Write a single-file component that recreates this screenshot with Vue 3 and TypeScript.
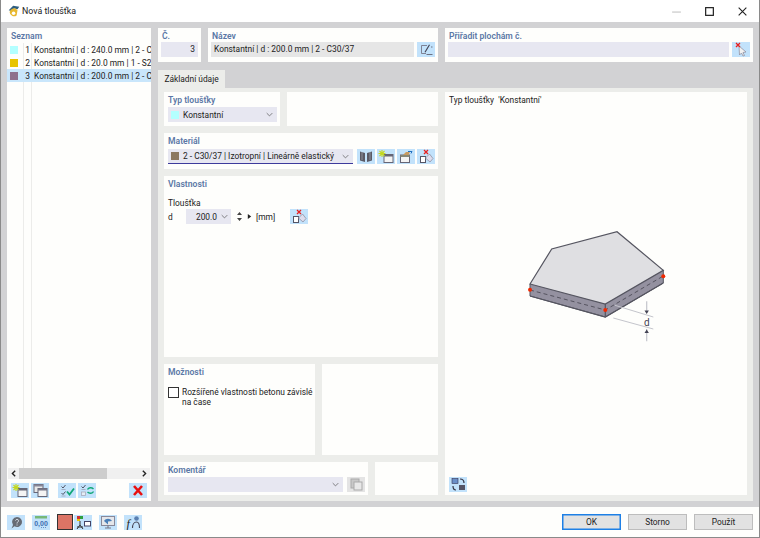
<script setup lang="ts">
interface Row {
  id: number;
  label: string;
  color: string;
  selected?: boolean;
}

const rows: Row[] = [
  { id: 1, label: "Konstantní | d : 240.0 mm | 2 - C30/37", color: "#b3ffff" },
  { id: 2, label: "Konstantní | d : 20.0 mm | 1 - S235", color: "#e8c400" },
  { id: 3, label: "Konstantní | d : 200.0 mm | 2 - C30/37", color: "#8f6f8c", selected: true },
];
</script>

<template>
  <div class="window">
    <header class="titlebar">
      <svg class="logo" viewBox="0 0 16 16">
        <path d="M2 7 L7 2 L14 3 L12 6 L8 5 L5 8 Z" fill="#2f5f80" />
        <path d="M3 9 A5 5 0 0 1 12 7 L11 13 A5 5 0 0 1 3 9 Z" fill="#e8b830" />
        <circle cx="7.5" cy="10.5" r="2" fill="#fff" />
      </svg>
      <span class="title">Nová tloušťka</span>
      <div class="winbtns">
        <svg viewBox="0 0 10 10" class="dim"><path d="M1 5.5h8" stroke="#c4c4c4" /></svg>
        <svg viewBox="0 0 10 10"><rect x="1.5" y="1.5" width="7" height="7" fill="none" stroke="#222" stroke-width="1.1" /></svg>
        <svg viewBox="0 0 10 10"><path d="M1.5 1.5l7 7M8.5 1.5l-7 7" stroke="#222" stroke-width="1" /></svg>
      </div>
    </header>

    <main class="body">
      <aside class="list card">
        <h3 class="legend first">Seznam</h3>
        <div class="rows">
          <div v-for="r in rows" :key="r.id" class="row" :class="{ selected: r.selected }">
            <span class="swatch-cell"><i class="swatch" :style="{ background: r.color }"></i></span>
            <span class="num">{{ r.id }}</span>
            <span class="row-text">{{ r.label }}</span>
          </div>
          <div class="guides"><i></i><i></i></div>
        </div>
        <div class="scrollbar">
          <svg viewBox="0 0 8 8"><path d="M5.5 1.5L3 4l2.5 2.5" fill="none" stroke="#222" stroke-width="1.2" /></svg>
          <div class="track"><div class="thumb"></div></div>
          <svg viewBox="0 0 8 8"><path d="M2.5 1.5L5 4 2.5 6.5" fill="none" stroke="#222" stroke-width="1.2" /></svg>
        </div>
        <div class="list-tools">
          <button class="ib">
            <svg viewBox="0 0 18 15"><rect x="7" y="5.500" width="9" height="8" fill="#f4f4f4" stroke="#667" /><rect x="7" y="5.500" width="9" height="2" fill="#667" /><path d="M5 1v7M1.500 4.500h7M2.500 2l5 5M7.500 2l-5 5" stroke="#c4d820" stroke-width="1.100" /></svg>
          </button>
          <button class="ib">
            <svg viewBox="0 0 18 15"><rect x="3" y="1.500" width="9" height="8" fill="#e8e8e8" stroke="#667" /><rect x="3" y="1.500" width="9" height="2" fill="#889" /><rect x="7" y="5.500" width="9" height="8" fill="#f4f4f4" stroke="#667" /><rect x="7" y="5.500" width="9" height="2" fill="#778" /></svg>
          </button>
          <button class="ib gap-left">
            <svg viewBox="0 0 18 15"><path d="M3.500 3.500l1.500 1.500 2.500-3M3.500 10l1.500 1.500 2.500-3" fill="none" stroke="#445" stroke-width=".9" /><path d="M3.500 6.500h4M3.500 13h4" stroke="#99a" stroke-width=".7" /><path d="M9 8.500l2.500 3 4.500-6" fill="none" stroke="#12a878" stroke-width="1.800" /></svg>
          </button>
          <button class="ib">
            <svg viewBox="0 0 18 15"><path d="M3.500 3.500l1.500 1.500 2.500-3" fill="none" stroke="#445" stroke-width=".9" /><path d="M3.500 6.500h4" stroke="#99a" stroke-width=".7" /><rect x="3.500" y="9" width="4" height="3.500" fill="#e4eef6" stroke="#aab" stroke-width=".8" /><path d="M9.500 6.500c1-2 4-2.500 6-.5M15.500 8.500c-1 2-4 2.500-6 .5" fill="none" stroke="#12a878" stroke-width="1.400" /></svg>
          </button>
          <button class="ib push-right">
            <svg viewBox="0 0 18 15"><path d="M5 3l8 9M13 3l-8 9" stroke="#e81010" stroke-width="2.600" /></svg>
          </button>
        </div>
      </aside>

      <section class="content">
        <div class="top">
          <div class="card top-no">
            <h3 class="legend first">Č.</h3>
            <div class="field num-field">3</div>
          </div>
          <div class="card top-name">
            <h3 class="legend first">Název</h3>
            <div class="field-row">
              <div class="field name-field">Konstantní | d : 200.0 mm | 2 - C30/37</div>
              <button class="ib">
                <svg viewBox="0 0 18 15"><path d="M10 3.500H4.500v8H9" fill="none" stroke="#778" stroke-width=".9" /><path d="M7.500 10l4.500-7.500 1 .6-4.500 7.500z" fill="#445" /><path d="M9.500 12.500h6M14 5h1.500" stroke="#556" stroke-width=".8" /></svg>
              </button>
            </div>
          </div>
          <div class="card top-assign">
            <h3 class="legend first">Přiřadit plochám č.</h3>
            <div class="field-row">
              <div class="field assign-field"></div>
              <button class="ib">
                <svg viewBox="0 0 18 15"><path d="M7 4l7 6-3 .5 1.500 3-1.500.5-1.500-3-2 2z" fill="#f2f2f2" stroke="#889" stroke-width=".7" /><path d="M4 1l4 4M8 1L4 5" stroke="#e82020" stroke-width="1.300" /></svg>
              </button>
            </div>
          </div>
        </div>

        <div class="tabs"><div class="tab">Základní údaje</div></div>

        <div class="tab-panel">
          <div class="left-col">
            <div class="line line-type">
              <div class="card type-card">
                <h3 class="legend">Typ tloušťky</h3>
                <div class="select type-select">
                  <i class="swatch" style="background: #b3ffff"></i>
                  <span>Konstantní</span>
                  <svg class="chev" viewBox="0 0 10 6"><path d="M1 1l4 4 4-4" fill="none" stroke="#555" /></svg>
                </div>
              </div>
              <div class="card grow"></div>
            </div>

            <div class="card material-card">
              <h3 class="legend">Materiál</h3>
              <div class="field-row">
                <div class="select material-select">
                  <i class="swatch" style="background: #8c7861"></i>
                  <span>2 - C30/37 | Izotropní | Lineárně elastický</span>
                  <svg class="chev" viewBox="0 0 10 6"><path d="M1 1l4 4 4-4" fill="none" stroke="#555" /></svg>
                </div>
                <button class="ib">
                  <svg viewBox="0 0 18 15"><path d="M3 2.500l5 1.500v9l-5-1.500zM15 2.500L10 4v9l5-1.500z" fill="#5a5a66" /><path d="M5 3v8M13 3v8" stroke="#a8acb8" stroke-width=".7" /></svg>
                </button>
                <button class="ib">
                  <svg viewBox="0 0 18 15"><rect x="7" y="5.500" width="9" height="8" fill="#f4f4f4" stroke="#667" /><rect x="7" y="5.500" width="9" height="2" fill="#667" /><path d="M5 1v7M1.500 4.500h7M2.500 2l5 5M7.500 2l-5 5" stroke="#c4d820" stroke-width="1.100" /></svg>
                </button>
                <button class="ib">
                  <svg viewBox="0 0 18 15"><rect x="3.500" y="6" width="9" height="7.500" fill="#f4f4f4" stroke="#667" /><rect x="3.500" y="6" width="9" height="2" fill="#887" /><path d="M6 6l3-3h4l-1.500 3z" fill="#c89a60" /><path d="M11 2.500h4l-1 2" fill="none" stroke="#2070c0" /></svg>
                </button>
                <button class="ib">
                  <svg viewBox="0 0 18 15"><rect x="3.500" y="7.500" width="5" height="6" fill="#fff" stroke="#556" /><path d="M8.500 9l4-4 3.500 4.500-3 3.500z" fill="#dde" stroke="#889" stroke-width=".7" /><path d="M7 1l4 4M11 1L7 5" stroke="#e82020" stroke-width="1.300" /></svg>
                </button>
              </div>
            </div>

            <div class="card props-card">
              <h3 class="legend">Vlastnosti</h3>
              <div class="props-title">Tloušťka</div>
              <div class="props-row">
                <span class="props-key">d</span>
                <div class="select value-select">
                  <span class="val">200.0</span>
                  <svg class="chev" viewBox="0 0 10 6"><path d="M1 1l4 4 4-4" fill="none" stroke="#555" /></svg>
                </div>
                <svg class="spin" viewBox="0 0 7 11"><path d="M3.500 1L6 4H1zM3.500 10L1 7h5z" fill="#444" /></svg>
                <svg class="next" viewBox="0 0 6 8"><path d="M1 1l4 3-4 3z" fill="#222" /></svg>
                <span class="unit">[mm]</span>
                <button class="ib">
                  <svg viewBox="0 0 18 15"><rect x="3.500" y="7.500" width="5" height="6" fill="#fff" stroke="#556" /><path d="M8.500 9l4-4 3.500 4.500-3 3.500z" fill="#dde" stroke="#889" stroke-width=".7" /><path d="M7 1l4 4M11 1L7 5" stroke="#e82020" stroke-width="1.300" /></svg>
                </button>
              </div>
            </div>

            <div class="line line-options">
              <div class="card options-card">
                <h3 class="legend">Možnosti</h3>
                <label class="check">
                  <i class="box"></i>
                  <span>Rozšířené vlastnosti betonu závislé na čase</span>
                </label>
              </div>
              <div class="card grow"></div>
            </div>

            <div class="line line-comment">
              <div class="card comment-card">
                <h3 class="legend">Komentář</h3>
                <div class="field-row">
                  <div class="select comment-select">
                    <svg class="chev" viewBox="0 0 10 6"><path d="M1 1l4 4 4-4" fill="none" stroke="#555" /></svg>
                  </div>
                  <button class="ib off">
                    <svg viewBox="0 0 18 15"><rect x="4" y="2" width="8" height="9" fill="#c8c8c8" stroke="#aaa" /><rect x="7" y="5" width="8" height="8" fill="#e8e8e8" stroke="#aaa" /></svg>
                  </button>
                </div>
              </div>
              <div class="card grow"></div>
            </div>
          </div>

          <div class="card preview">
            <div class="preview-title">Typ tloušťky&nbsp; 'Konstantní'</div>
            <svg class="plate" viewBox="0 0 180 130">
              <path d="M30 66v12l75.300 21 58-34V52z" fill="#9491a0" stroke="#555560" />
              <path d="M30 66L51.700 31 117 13.700 163.300 52.300 105.300 86z" fill="#dfdfe2" stroke="#555560" stroke-width="1.200" />
              <path d="M105.300 86v12" stroke="#555560" stroke-width="1.200" />
              <path d="M30 72l75.300 20 58-34" fill="none" stroke="#55535f" stroke-dasharray="4 3" />
              <path d="M30 78l75.300 21 58-34" fill="none" stroke="#555560" stroke-width="1.200" />
              <circle cx="30" cy="71.700" r="2" fill="#f02800" />
              <circle cx="105.300" cy="92" r="2" fill="#f02800" />
              <circle cx="163.300" cy="58.300" r="2" fill="#f02800" />
              <path d="M115 87.300l38.300 11.700M113.300 100l40 11" stroke="#c4c5cc" />
              <path d="M146.700 83.300v11M146.700 111v12.300" stroke="#c4c5cc" stroke-width="1.200" />
              <path d="M144.500 92.500h4.400l-2.200 3.500zM144.500 115h4.400l-2.200-3.500z" fill="#445" />
              <text x="146.700" y="108" class="dim-label" text-anchor="middle">d</text>
            </svg>
            <button class="ib preview-btn">
              <svg viewBox="0 0 18 15"><rect x="3" y="1.500" width="6" height="5" fill="#6a8fc8" stroke="#335" stroke-width=".6" /><rect x="10" y="8" width="6" height="5" fill="#556" /><path d="M11 2c2.500 0 4 1 4 4M7 13c-2 0-3-1-3-4" fill="none" stroke="#334" stroke-width="1.200" /></svg>
            </button>
          </div>
        </div>
      </section>
    </main>

    <footer class="footer">
      <div class="foot-icons">
        <button class="ib">
          <svg viewBox="0 0 18 15"><path d="M10 2a5 5 0 1 1-2.500 9.300L4.500 13.500l1.500-3.500A5 5 0 0 1 10 2z" fill="#666b74" /><path d="M8.500 5.500c.5-1.500 3-1.500 3 .2 0 1.300-1.500 1.300-1.500 2.800M10 9.500v1" fill="none" stroke="#dfe6ee" stroke-width="1" /></svg>
        </button>
        <button class="ib">
          <svg viewBox="0 0 18 15"><rect x="3" y="1" width="12" height="2.500" fill="#76b878" /><text x="9" y="11" class="mini" text-anchor="middle">0,00</text><path d="M9 12.500h6" stroke="#3d6fb0" stroke-width=".7" stroke-dasharray="1 1" /></svg>
        </button>
        <i class="red-box"></i>
        <button class="ib joined">
          <svg viewBox="0 0 18 15"><rect x="3" y="1" width="3" height="3" fill="#d03030" /><rect x="6" y="1" width="3" height="3" fill="#30a040" /><rect x="3" y="4" width="3" height="2" fill="#e8c400" /><path d="M6 6v4M3 14l3-4 3 4M3 12h6" fill="none" stroke="#333" stroke-width="1" /><rect x="10.500" y="6.500" width="6" height="4.500" fill="#fff" stroke="#446" /></svg>
        </button>
        <button class="ib">
          <svg viewBox="0 0 18 15"><rect x="2.500" y="1.500" width="13" height="9" fill="#e4e6ea" stroke="#889" /><path d="M5 6c2-3 6-3 8 0l-4 .5v3z" fill="#4a7fb8" /><path d="M6 13h6M9 10.500V13" stroke="#778" stroke-width="1.100" /></svg>
        </button>
        <button class="ib">
          <svg viewBox="0 0 18 15"><text x="2.500" y="12.500" class="fx">f</text><circle cx="12.500" cy="3.500" r="2.300" fill="#5a7fb0" /><path d="M8.500 13c0-3 1.500-6 4-6s3 3 3 6" fill="none" stroke="#445" stroke-width="1.100" /></svg>
        </button>
      </div>
      <div class="actions">
        <button class="btn primary">OK</button>
        <button class="btn">Storno</button>
        <button class="btn">Použít</button>
      </div>
    </footer>
  </div>
</template>

<style scoped>
.window {
  width: 760px;
  height: 538px;
  box-sizing: border-box;
  display: flex;
  flex-direction: column;
  background: #fefefc;
  border: 1px solid #8a8a8a;
  border-top: none;
  font-family: Roboto, "Open Sans", sans-serif;
  font-size: 8.4px;
  color: #222;
}

.titlebar {
  height: 22px;
  flex: none;
  display: flex;
  align-items: center;
  padding-left: 6px;
  background: #fff;
}
.logo {
  width: 14px;
  height: 14px;
}
.title {
  margin-left: 1px;
  font-size: 8.8px;
}
.winbtns {
  margin-left: auto;
  display: flex;
  gap: 22px;
  margin-right: 11px;
}
.winbtns svg {
  width: 11px;
  height: 11px;
}

.body {
  height: 485px;
  flex: none;
  box-sizing: border-box;
  display: flex;
  gap: 7px;
  padding: 6px;
  background: #d2d2d4;
}

.card {
  background: #fefefc;
  box-sizing: border-box;
}
.legend {
  margin: 0;
  font-size: 8.6px;
  font-weight: 600;
  color: #5b78a6;
  line-height: 12px;
  padding: 2px 0 0 4px;
}

.list {
  width: 144px;
  flex: none;
  display: flex;
  flex-direction: column;
}
.rows {
  position: relative;
  flex: 1;
  margin-top: 1px;
}
.row {
  position: relative;
  z-index: 1;
  height: 13px;
  display: flex;
  align-items: center;
  white-space: nowrap;
  overflow: hidden;
}
.row.selected {
  background: #c9e6fb;
}
.swatch-cell {
  width: 16px;
  padding-left: 3px;
  box-sizing: border-box;
  flex: none;
  display: flex;
}
.swatch {
  display: block;
  width: 8px;
  height: 8px;
  flex: none;
}
.num {
  width: 7px;
  text-align: right;
  flex: none;
}
.row-text {
  margin-left: 4px;
  overflow: hidden;
}
.guides {
  position: absolute;
  top: 0;
  bottom: 0;
  left: 16px;
  width: 9px;
  display: flex;
  justify-content: space-between;
}
.guides i {
  width: 1px;
  background: #ececea;
}

.scrollbar {
  height: 11px;
  margin: 0 1px;
  display: flex;
  align-items: center;
  background: #f0f0f0;
}
.scrollbar svg {
  width: 11px;
  height: 9px;
  flex: none;
}
.track {
  flex: 1;
  height: 100%;
}
.thumb {
  width: 88px;
  height: 100%;
  background: #cdcdcd;
}

.list-tools {
  display: flex;
  gap: 2px;
  padding: 4px 4px 3px;
}
.gap-left {
  margin-left: 7px;
}
.push-right {
  margin-left: auto;
}

.ib {
  width: 18px;
  height: 15px;
  flex: none;
  padding: 0;
  border: none;
  background: #c2e2fb;
  display: block;
}
.ib svg {
  display: block;
  width: 18px;
  height: 15px;
}
.ib.off {
  background: #e4e4e4;
}

.content {
  flex: 1;
  min-width: 0;
  display: flex;
  flex-direction: column;
}
.top {
  display: flex;
  gap: 7px;
  height: 34px;
  flex: none;
}
.top-no {
  width: 43px;
}
.top-name {
  width: 230px;
}
.top-assign {
  flex: 1;
}
.field {
  height: 15px;
  line-height: 15px;
  background: #e7e7f1;
  padding: 0 3px;
  box-sizing: border-box;
}
.num-field {
  margin: 0 3px;
  text-align: right;
}
.field-row {
  display: flex;
  gap: 2px;
  padding: 0 3px;
}
.name-field {
  flex: 1;
  background: #e6e6e6;
  margin-right: 1px;
}
.assign-field {
  flex: 1;
  margin-right: 1px;
}

.tabs {
  height: 18px;
  margin-top: 8px;
  flex: none;
  display: flex;
}
.tab {
  width: 67px;
  background: #ecedea;
  text-align: center;
  line-height: 18px;
}

.tab-panel {
  flex: 1;
  min-height: 0;
  display: flex;
  gap: 7px;
  padding: 4px 6px 6px;
  background: #ecedea;
}
.left-col {
  width: 274px;
  flex: none;
  display: flex;
  flex-direction: column;
  gap: 7px;
}
.line {
  display: flex;
  gap: 7px;
}
.grow {
  flex: 1;
}
.line-type {
  height: 34px;
  flex: none;
}
.type-card {
  width: 116px;
}
.type-card .legend {
  margin-bottom: 1px;
}
.select {
  height: 15px;
  display: flex;
  align-items: center;
  background: #e7e7f1;
  padding: 0 4px 0 3px;
  box-sizing: border-box;
}
.select .swatch {
  margin-right: 4px;
}
.chev {
  width: 7px;
  height: 5px;
  margin-left: auto;
  flex: none;
}
.type-select {
  margin: 0 3px 0 4px;
}
.material-card {
  height: 36px;
  flex: none;
}
.material-card .field-row {
  padding-left: 4px;
  padding-top: 2px;
}
.material-select {
  flex: 1;
  margin-right: 2px;
  border-bottom: 1px solid #3d3a9c;
}
.props-card {
  height: 181px;
  flex: none;
}
.props-title {
  margin: 7px 0 0 4px;
  line-height: 12px;
}
.props-row {
  display: flex;
  align-items: center;
  padding-left: 4px;
}
.props-key {
  width: 18px;
}
.value-select {
  width: 45px;
  padding-left: 0;
  padding-right: 3px;
}
.val {
  width: 31px;
  text-align: right;
}
.spin {
  width: 7px;
  height: 11px;
  margin-left: 5px;
}
.next {
  width: 5px;
  height: 7px;
  margin-left: 4px;
}
.unit {
  width: 34px;
  margin-left: 4px;
}
.line-options {
  height: 91px;
  flex: none;
}
.options-card {
  width: 151px;
}
.check {
  display: flex;
  align-items: flex-start;
  gap: 3px;
  margin: 9px 2px 0 4px;
  line-height: 10px;
}
.box {
  width: 9px;
  height: 9px;
  flex: none;
  border: 1px solid #333;
  background: #fff;
}
.line-comment {
  height: 33px;
  flex: none;
}
.comment-card {
  width: 204px;
}
.comment-card .legend {
  margin-bottom: 1px;
}
.comment-card .field-row {
  padding-left: 4px;
  gap: 4px;
}
.comment-select {
  flex: 1;
}

.preview {
  flex: 1;
  min-width: 0;
  display: flex;
  flex-direction: column;
  padding: 2px 3px 3px 4px;
}
.preview-title {
  line-height: 12px;
}
.plate {
  width: 180px;
  height: 130px;
  margin: 112px 0 0 51px;
  flex: none;
}
.dim-label {
  font-size: 10px;
  fill: #445;
}
.preview-btn {
  margin-top: auto;
}
.mini {
  font-size: 7px;
  font-weight: 700;
  fill: #3d6fb0;
}
.fx {
  font-family: "Liberation Serif", serif;
  font-style: italic;
  font-size: 12px;
  fill: #222;
}

.footer {
  flex: 1;
  display: flex;
  align-items: center;
  padding: 0 6px;
  background: #fefefc;
}
.foot-icons {
  display: flex;
  align-items: center;
  gap: 7px;
}
.red-box {
  display: block;
  width: 14px;
  height: 14px;
  background: #dc7465;
  border: 1px solid #333;
}
.joined {
  margin-left: -6px;
}
.actions {
  margin-left: auto;
  display: flex;
  gap: 7px;
}
.btn {
  width: 57px;
  height: 14px;
  padding: 0;
  border: 1px solid #bdbdbd;
  background: #e2e2e2;
  font: inherit;
  color: #222;
  box-sizing: content-box;
  line-height: 13px;
}
.btn.primary {
  border-color: #1e80e6;
  box-shadow: inset 0 0 0 0.5px #1e80e6;
}
</style>

<style>
html,
body {
  margin: 0;
  background: #fff;
}
</style>
